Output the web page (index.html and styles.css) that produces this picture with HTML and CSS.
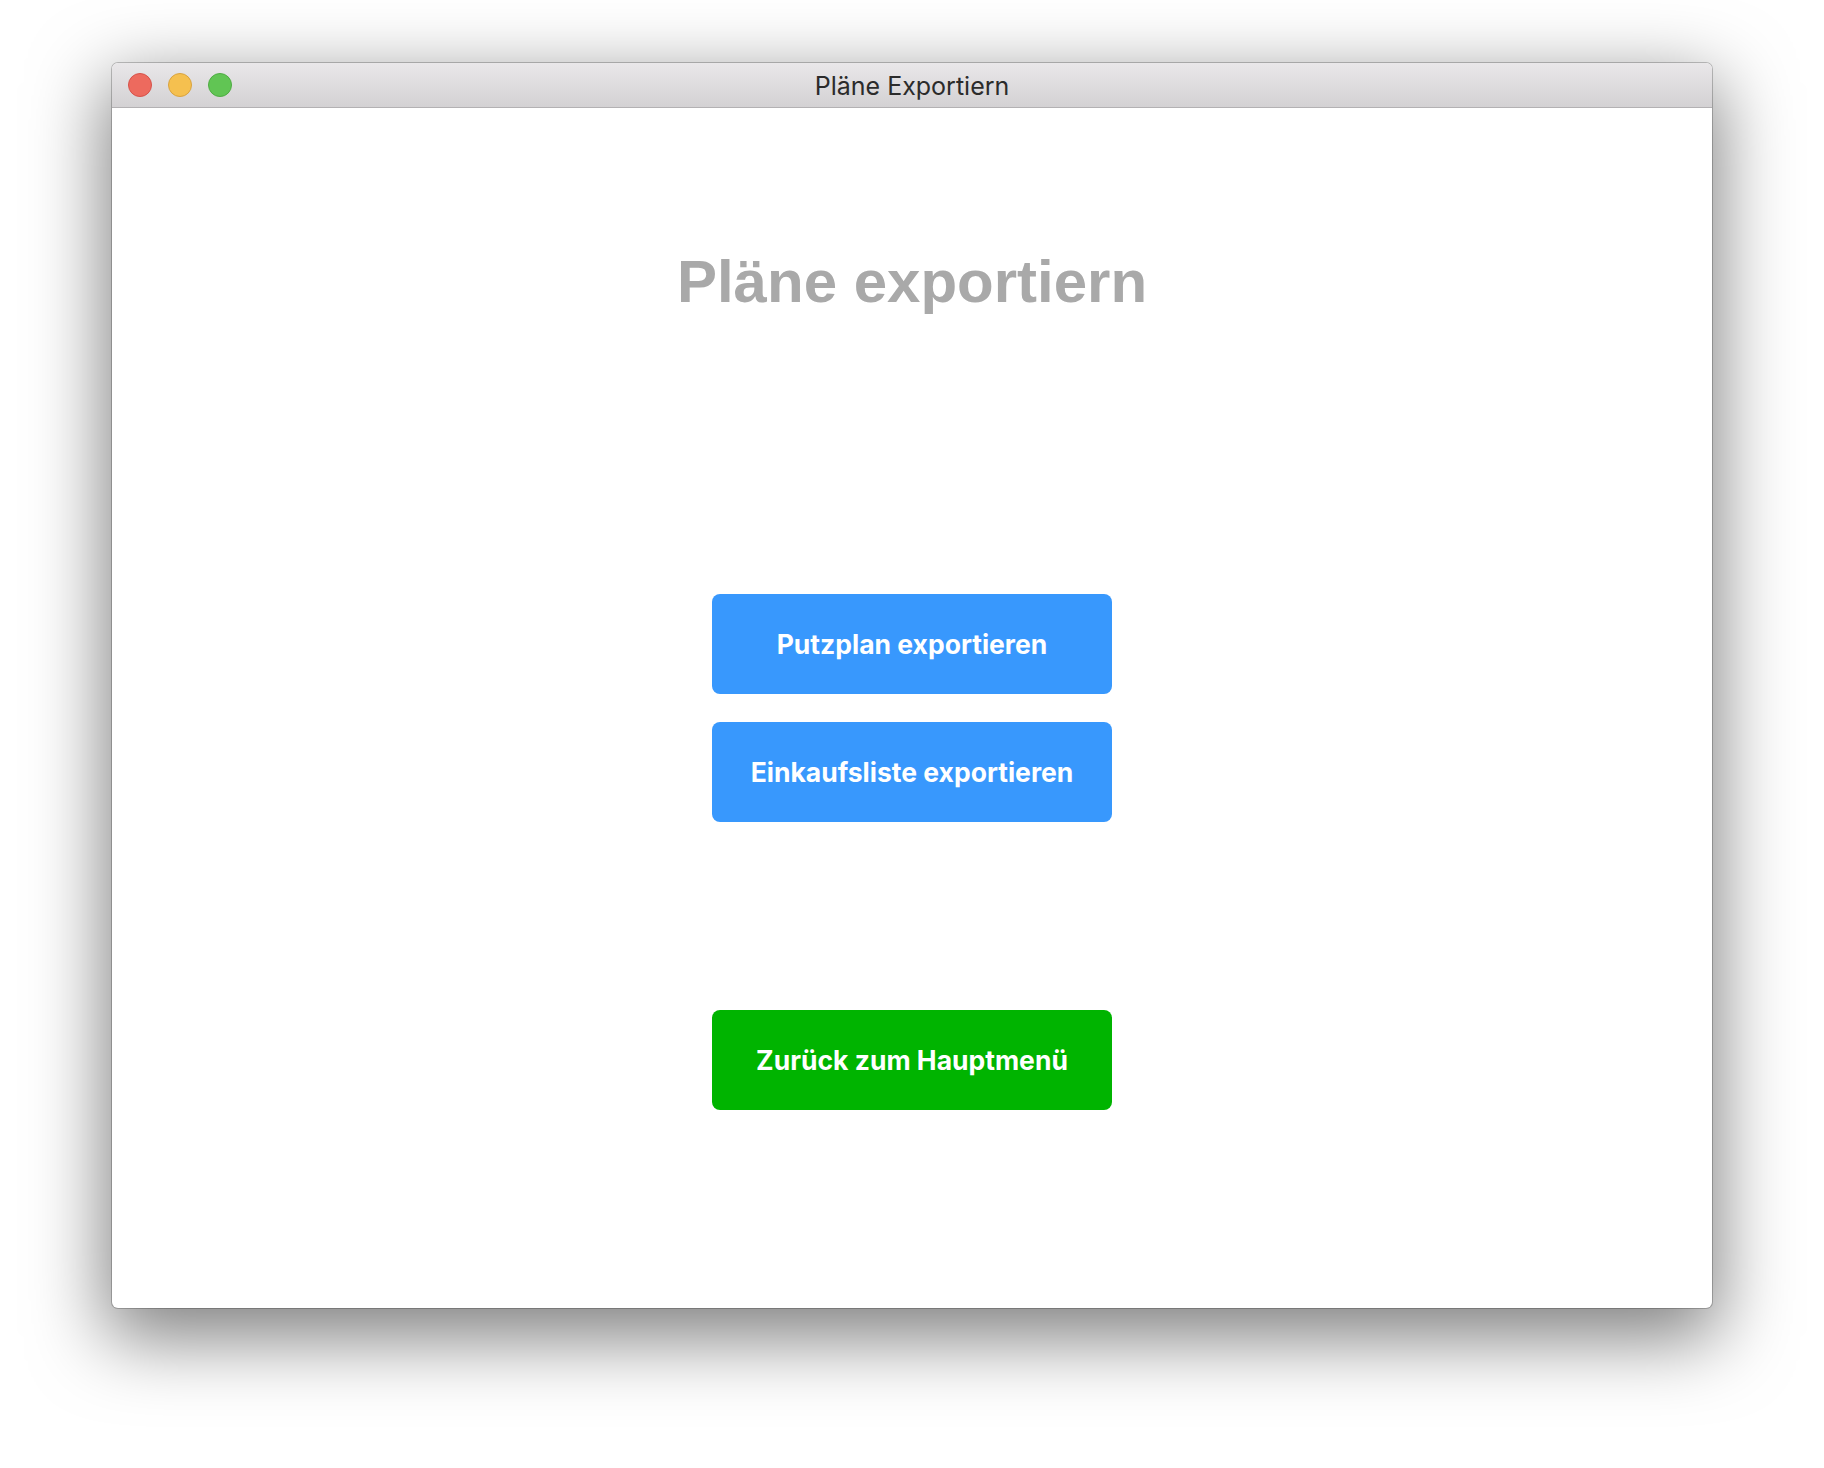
FILE: index.html
```html
<!DOCTYPE html>
<html lang="de">
<head>
<meta charset="utf-8">
<title>Pläne Exportiern</title>
<link rel="stylesheet" href="styles.css">
</head>
<body>
<div class="stage">
  <div class="window">
    <div class="titlebar">
      <div class="lights">
        <span class="light red"></span>
        <span class="light yellow"></span>
        <span class="light green"></span>
      </div>
      <div class="title">Pläne Exportiern</div>
    </div>
    <div class="content">
      <h1 class="heading">Pläne exportiern</h1>
      <div class="export-group">
        <button class="btn btn-blue">Putzplan exportieren</button>
        <button class="btn btn-blue">Einkaufsliste exportieren</button>
      </div>
      <button class="btn btn-green">Zurück zum Hauptmenü</button>
    </div>
  </div>
</div>
</body>
</html>
```

FILE: styles.css
```css
html, body {
  margin: 0;
  padding: 0;
  background: #ffffff;
}

.stage {
  width: 1824px;
  height: 1468px;
  padding: 63px 0 0 112px;
  box-sizing: border-box;
  overflow: hidden;
}

.window {
  width: 1600px;
  height: 1245px;
  border-radius: 6px;
  background: #ffffff;
  box-shadow: 0 0 0 1px rgba(0, 0, 0, 0.22), 0 24px 75px 6px rgba(0, 0, 0, 0.5);
  display: flex;
  flex-direction: column;
  overflow: hidden;
}

.titlebar {
  position: relative;
  height: 44px;
  flex: none;
  background: linear-gradient(to bottom, #e9e7e9 0%, #d3d1d3 100%);
  border-bottom: 1px solid #b3b1b3;
  display: flex;
  align-items: center;
  justify-content: center;
}

.lights {
  position: absolute;
  left: 16px;
  top: 10px;
  display: flex;
  gap: 16px;
}

.light {
  width: 22px;
  height: 22px;
  border-radius: 50%;
  display: block;
}

.red { background: #ed6a5e; border: 1px solid #d6524a; }
.yellow { background: #f5c04f; border: 1px solid #d9a33f; }
.green { background: #61c554; border: 1px solid #4fac43; }

.title {
  font-family: "Inter", "Noto Sans", sans-serif;
  font-size: 25px;
  color: #2b2b2b;
  line-height: 1;
  padding-top: 3px;
}

.content {
  flex: 1;
  display: flex;
  flex-direction: column;
  align-items: center;
}

.heading {
  margin: 138px 0 0;
  font-family: "Liberation Sans", Arial, sans-serif;
  font-weight: 700;
  font-size: 60px;
  line-height: 72px;
  color: #a9a9a9;
}

.export-group {
  margin-top: 276px;
  display: flex;
  flex-direction: column;
  gap: 28px;
}

.btn {
  width: 400px;
  height: 100px;
  border: none;
  border-radius: 8px;
  font-family: "Inter", "Noto Sans", sans-serif;
  font-weight: 700;
  font-size: 26.5px;
  color: #ffffff;
  padding: 0;
  cursor: pointer;
}

.btn-blue { background: #3898fd; }

.btn-green {
  margin-top: 188px;
  background: #00b400;
}
```
